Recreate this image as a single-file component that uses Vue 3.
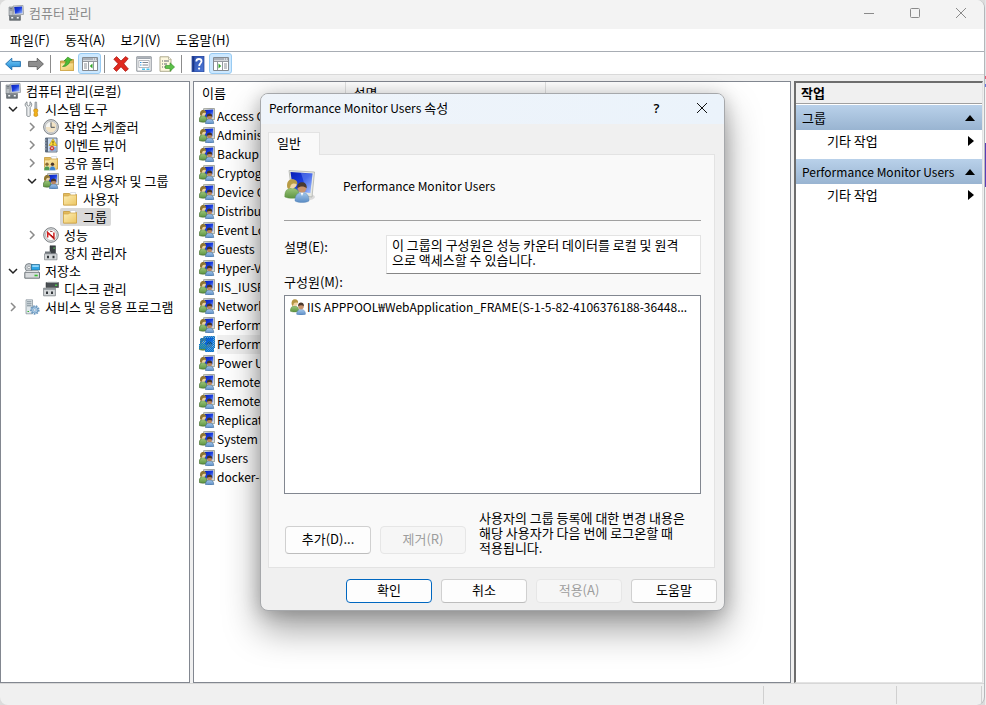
<script setup>
import { ref } from 'vue'

const menus = ['파일(F)', '동작(A)', '보기(V)', '도움말(H)']

const tools = [
  { icon: 'back', label: '뒤로' },
  { icon: 'forward', label: '앞으로' },
  { sep: true },
  { icon: 'up', label: '한 수준 위로' },
  { icon: 'tree-pane', label: '콘솔 트리', on: true },
  { sep: true },
  { icon: 'delete', label: '삭제' },
  { icon: 'props', label: '속성' },
  { icon: 'export', label: '목록 내보내기' },
  { sep: true },
  { icon: 'help', label: '도움말' },
  { icon: 'action-pane', label: '작업 창', on: true },
]

const tree = [
  { level: 0, icon: 'computer', text: '컴퓨터 관리(로컬)' },
  { level: 1, icon: 'tools', text: '시스템 도구', state: 'open' },
  { level: 2, icon: 'clock', text: '작업 스케줄러', state: 'closed' },
  { level: 2, icon: 'events', text: '이벤트 뷰어', state: 'closed' },
  { level: 2, icon: 'shared', text: '공유 폴더', state: 'closed' },
  { level: 2, icon: 'group', text: '로컬 사용자 및 그룹', state: 'open' },
  { level: 3, icon: 'folder', text: '사용자' },
  { level: 3, icon: 'folder', text: '그룹', selected: true },
  { level: 2, icon: 'perf', text: '성능', state: 'closed' },
  { level: 2, icon: 'device', text: '장치 관리자' },
  { level: 1, icon: 'storage', text: '저장소', state: 'open' },
  { level: 2, icon: 'disk', text: '디스크 관리' },
  { level: 1, icon: 'services', text: '서비스 및 응용 프로그램', state: 'closed' },
]

const groups = [
  'Access Control Assistance Operators',
  'Administrators',
  'Backup Operators',
  'Cryptographic Operators',
  'Device Owners',
  'Distributed COM Users',
  'Event Log Readers',
  'Guests',
  'Hyper-V Administrators',
  'IIS_IUSRS',
  'Network Configuration Operators',
  'Performance Log Users',
  'Performance Monitor Users',
  'Power Users',
  'Remote Desktop Users',
  'Remote Management Users',
  'Replicator',
  'System Managed Accounts Group',
  'Users',
  'docker-users',
]
const selectedGroup = 12

const actions = [
  { title: '그룹' },
  { title: 'Performance Monitor Users', latin: true },
]

const description = ref('이 그룹의 구성원은 성능 카운터 데이터를 로컬 및 원격\n으로 액세스할 수 있습니다.')
</script>

<template>
  <div class="screen">
    <svg class="sprite" aria-hidden="true">
      <defs>
        <linearGradient id="g-screen" x1="0" y1="0" x2="1" y2="1">
          <stop offset="0" stop-color="#0a1fb4" />
          <stop offset=".5" stop-color="#1a3ee0" />
          <stop offset="1" stop-color="#a9c6ff" />
        </linearGradient>
        <linearGradient id="g-folder" x1="0" y1="0" x2="1" y2="1">
          <stop offset="0" stop-color="#fdeeb5" />
          <stop offset="1" stop-color="#ecc663" />
        </linearGradient>
        <linearGradient id="g-blue" x1="0" y1="0" x2="0" y2="1">
          <stop offset="0" stop-color="#7fd0f8" />
          <stop offset="1" stop-color="#1583d2" />
        </linearGradient>
        <linearGradient id="g-help" x1="0" y1="0" x2="1" y2="1">
          <stop offset="0" stop-color="#2c4fae" />
          <stop offset="1" stop-color="#4d78d6" />
        </linearGradient>
        <linearGradient id="g-green" x1="0" y1="0" x2="0" y2="1">
          <stop offset="0" stop-color="#9cc67c" />
          <stop offset="1" stop-color="#5d9440" />
        </linearGradient>
        <linearGradient id="g-coat" x1="0" y1="0" x2="0" y2="1">
          <stop offset="0" stop-color="#a4c8ec" />
          <stop offset="1" stop-color="#5b8cc4" />
        </linearGradient>
        <pattern id="g-check" width="2" height="2" patternUnits="userSpaceOnUse">
          <rect width="1" height="1" fill="#0078d7" />
          <rect x="1" y="1" width="1" height="1" fill="#0078d7" />
        </pattern>
      </defs>

      <symbol id="i-computer" viewBox="0 0 16 16">
        <path d="M5 1 15 .4 15.6 9.4 6 10.2z" fill="#d5d8da" stroke="#8b9196" stroke-width=".7" />
        <path d="M6.2 2 14 1.6 14.5 8.2 7 8.8z" fill="url(#g-screen)" />
        <path d="M1 2h4v9H1z" fill="#b9bec2" stroke="#767d83" stroke-width=".6" />
        <path d="M1.7 3.4h2.6M1.7 5h2.6" stroke="#5c6369" stroke-width=".8" />
        <path d="M1.6 10.5h10.8v4.8H1.6z" fill="#6f777d" stroke="#4a5055" stroke-width=".6" />
        <path d="M3.2 12h2v1.6h-2zM8.8 12h2v1.6h-2z" fill="#f2f4f5" />
        <path d="M1.6 10.9h10.8" stroke="#a5abb0" stroke-width=".8" />
      </symbol>

      <symbol id="i-person-pair" viewBox="0 0 16 16">
        <path d="M.3 12.2C.3 8.800 1.800 7 4.600 7s4.300 1.800 4.300 5.200c-2 1-6.600 1-8.600 0z" fill="url(#g-green)" stroke="#517f38" stroke-width=".4" />
        <circle cx="4.800" cy="3.900" r="3" fill="#f0d2a4" />
        <path d="M1.600 5.200C1.200 1.900 2.900.2 5 .3c2.100.1 3.400 1.600 3.100 3.600-2-.9-3.600-.5-4.400.6-.2 1-.4 2-1.100 2.700z" fill="#b59643" />
        <path d="M6.600 15.200c0-3.200 1.600-4.800 4.400-4.800s4.500 1.600 4.500 4.800c-2 1.100-6.900 1.100-8.900 0z" fill="url(#g-coat)" stroke="#4877ad" stroke-width=".4" />
        <circle cx="11" cy="7.400" r="2.800" fill="#c8936c" />
        <path d="M8.100 7.200C8 4.600 9.400 3.600 11 3.600s3 1 2.900 3.600c-1.600-1.300-4.100-1.200-5.800 0z" fill="#4a382c" />
      </symbol>

      <symbol id="i-group" viewBox="0 0 16 16">
        <path d="M4.600.7 15.400.4 15.600 11.500 5 11z" fill="#dcdfd6" stroke="#7f847b" stroke-width=".7" />
        <path d="M5.800 1.900 14.200 1.600 14.300 9.800 6 9.500z" fill="url(#g-screen)" />
        <path d="M.3 13.500C.1 9.500 1.400 7.600 4 7.600s4.100 1.900 4 5.900c-2 .9-5.700.9-7.700 0z" fill="url(#g-green)" stroke="#3f652b" stroke-width=".6" />
        <circle cx="4.300" cy="5.200" r="2.500" fill="#ead0a0" />
        <path d="M1.200 7.600C.5 4 1.900 1.900 4.300 2c2 .1 3.100 1.400 2.900 3.100-1.800-.8-3.100-.5-3.700.4-.2 1-.5 1.800-1.200 2.400z" fill="#8f7632" />
        <path d="M6.500 15.600c0-3.400 1.500-4.700 4.100-4.700s4.100 1.300 4.100 4.700c-2 .6-6.200.6-8.200 0z" fill="url(#g-coat)" stroke="#3d6893" stroke-width=".6" />
        <circle cx="10.600" cy="8.800" r="2.500" fill="#b98561" />
        <path d="M7.900 8.800c-.1-2.300 1.100-3.300 2.700-3.300s2.800 1 2.700 3.300c-1.600-1.200-3.700-1.200-5.400 0z" fill="#43342a" />
      </symbol>

      <symbol id="i-group-selected" viewBox="0 0 16 16">
        <use href="#i-group" width="16" height="16" />
        <path d="M1 2h3l1-2h11v11l-1 1v4H6v-3H0V8h1z" fill="#0078d7" opacity=".35" />
        <path d="M1 2h3l1-2h11v11l-1 1v4H6v-3H0V8h1z" fill="url(#g-check)" shape-rendering="crispEdges" />
      </symbol>

      <symbol id="i-folder" viewBox="0 0 16 16">
        <path d="M1.500 2.500h6l1 1h6v10.500h-13z" fill="#e3bb5c" stroke="#c59a3d" stroke-width=".8" />
        <path d="M8.600 1.500h5v3h-5z" fill="#fff" stroke="#b9bfc9" stroke-width=".5" />
        <path d="M1.500 5h5l1-1h7v10h-13z" fill="url(#g-folder)" stroke="#cfa446" stroke-width=".7" />
      </symbol>

      <symbol id="i-shared" viewBox="0 0 16 16">
        <use href="#i-folder" width="16" height="16" />
        <circle cx="4" cy="9.200" r="1.700" fill="#8a6a34" />
        <path d="M1 15.400c0-3 1-4.200 3-4.200s3 1.200 3 4.200z" fill="#4f9a50" stroke="#fff" stroke-width=".3" />
        <circle cx="9.500" cy="9.200" r="1.700" fill="#4a382c" />
        <path d="M6.500 15.400c0-3 1-4.200 3-4.200s3 1.200 3 4.200z" fill="#3f86cc" stroke="#fff" stroke-width=".3" />
      </symbol>

      <symbol id="i-tools" viewBox="0 0 16 16">
        <path d="M3 .8v3.200l1.500 1L6 4V.8c1.400.8 1.900 2 1.700 3.400C7.500 5.300 6.800 6 6.200 6.500v8c0 1.300-3.400 1.300-3.400 0v-8C2.200 6 1.400 5.300 1.200 4.200 1 2.800 1.600 1.600 3 .8z" fill="#eceeef" stroke="#71787d" stroke-width=".8" />
        <path d="M11 1h1.600l.3 6.500h-2.200z" fill="#b4babe" stroke="#747b80" stroke-width=".5" />
        <path d="M10.200 8h3.200l.6 2-.8 1.200.6 3.300c-.8 1.200-3.200 1.200-4 0l.6-3.300L9.600 10z" fill="#f2b21c" stroke="#b97d0c" stroke-width=".6" />
      </symbol>

      <symbol id="i-clock" viewBox="0 0 16 16">
        <circle cx="8" cy="8" r="7.400" fill="#d8dadc" stroke="#75797d" stroke-width=".9" />
        <circle cx="8" cy="8" r="5.600" fill="#f6f6f2" stroke="#a4a7aa" stroke-width=".6" />
        <path d="M8 2.800V8H2.800A5.200 5.200 0 0 0 13.200 8 5.200 5.200 0 0 0 8 2.800z" fill="#f1e2c4" />
        <path d="M8 3.400V8.300h3.800" fill="none" stroke="#4c5258" stroke-width="1" />
      </symbol>

      <symbol id="i-events" viewBox="0 0 16 16">
        <path d="M2.500 1h11.500v14H2.500z" fill="#c9daee" stroke="#5e6d80" stroke-width=".9" />
        <path d="M2.500 1H5v14H2.500z" fill="#5b6a7e" />
        <path d="M1.500 3h2M1.500 6h2M1.500 9h2M1.500 12h2" stroke="#aeb8c4" stroke-width="1" />
        <path d="M6.500 13h6.500M6.500 11h6.500" stroke="#5580c2" stroke-width="1" />
        <path d="M10 1.800 14 8.500H6z" fill="#fcd934" stroke="#bd9412" stroke-width=".6" />
        <path d="M10 4v2.500M10 7v.8" stroke="#4b3b00" stroke-width=".9" />
        <circle cx="9" cy="11.200" r="2.200" fill="#d2362b" />
        <path d="M8.100 10.300 9.900 12.100M9.900 10.300 8.100 12.100" stroke="#fff" stroke-width=".7" />
      </symbol>

      <symbol id="i-perf" viewBox="0 0 16 16">
        <circle cx="8" cy="8" r="7.300" fill="#e2e4e5" stroke="#6d7276" stroke-width=".9" />
        <circle cx="8" cy="8" r="5.500" fill="#fff" stroke="#8d9296" stroke-width=".6" />
        <path d="M4.700 10.500V5.600l6.200 5.800V5.500" fill="none" stroke="#d02020" stroke-width="1.500" />
        <path d="M7 4.200 9.500 4.600M8 8l3 3.200" stroke="#801010" stroke-width=".8" />
      </symbol>

      <symbol id="i-device" viewBox="0 0 16 16">
        <path d="M7 .8h5.500v8H7z" fill="#3c4145" stroke="#25292c" stroke-width=".5" />
        <path d="M10.500 2.500h1.200v1.200h-1.200z" fill="#5fe05a" />
        <path d="M2 6.500h6V9H2z" fill="#71777c" />
        <path d="M1.500 8.800h12.500v6H1.500z" fill="#d4d7d9" stroke="#7c8287" stroke-width=".7" />
        <path d="M4 10.800h2v2.400H4zM9.500 10.800h2v2.400h-2z" fill="#33383c" />
      </symbol>

      <symbol id="i-storage" viewBox="0 0 16 16">
        <circle cx="5" cy="4.500" r="4" fill="#c6cbcf" stroke="#6b7378" stroke-width=".8" />
        <circle cx="5" cy="4.500" r="1.300" fill="#fff" stroke="#7c8489" stroke-width=".6" />
        <path d="M7.500 1.500h8v5.500h-8z" fill="#2fa6e6" stroke="#17648f" stroke-width=".7" />
        <path d="M8.300 2.300h6.400v1.600H8.300z" fill="#9fdcfb" />
        <path d="M.8 9.500h14.700v5.700H.8z" fill="#d8dbdd" stroke="#5f666b" stroke-width=".9" />
        <path d="M1 9.500h14.200l-1.400-1.800H2.400z" fill="#f1f2f3" stroke="#767c81" stroke-width=".6" />
        <path d="M10.500 11.700h3.200v1.600h-3.200z" fill="#35c22d" />
      </symbol>

      <symbol id="i-disk" viewBox="0 0 16 16">
        <path d="M3 1.500h12.500v5H3z" fill="#4a4f53" stroke="#2c3033" stroke-width=".5" />
        <path d="M3 1.800 5 .8h8.800l1.600 1z" fill="#aeb3b7" />
        <path d="M12 3.600h2.200v1.200H12z" fill="#4be045" />
        <path d="M.6 7.200h11.800v7.600H.6z" fill="#d4d7d9" stroke="#787e83" stroke-width=".8" />
        <path d="M.6 7.200h11.800v1.600H.6z" fill="#8d9398" />
        <path d="M3 10.500h2v2.600H3zM8 10.500h2v2.600H8z" fill="#33383c" />
      </symbol>

      <symbol id="i-services" viewBox="0 0 16 16">
        <path d="M2 .8h6.500v14H2z" fill="#dfe6ea" stroke="#7f8c95" stroke-width=".7" />
        <path d="M3 2.800h4.500M3 4.800h4.500M3 6.800h4.500" stroke="#6f7f8a" stroke-width=".9" />
        <path d="M3.500 12.500H5" stroke="#35b52d" stroke-width="1.200" />
        <circle cx="10.800" cy="11" r="3.900" fill="none" stroke="#6e9cc4" stroke-width="1.800" stroke-dasharray="1.600 1.100" />
        <circle cx="10.800" cy="11" r="3.200" fill="#a9cbe8" stroke="#5785ad" stroke-width=".7" />
        <circle cx="10.800" cy="11" r="1.200" fill="#fff" stroke="#5785ad" stroke-width=".5" />
      </symbol>

      <symbol id="i-back" viewBox="0 0 16 16">
        <path d="M.6 8 6.800 2.200V5.400H15.400V10.600H6.800V13.800z" fill="url(#g-blue)" stroke="#1a6bab" stroke-width=".9" stroke-linejoin="round" />
      </symbol>
      <symbol id="i-forward" viewBox="0 0 16 16">
        <path d="M15.400 8 9.200 2.200V5.400H.6V10.600H9.200V13.800z" fill="#8e8e8e" stroke="#5c5c5c" stroke-width=".9" stroke-linejoin="round" />
      </symbol>
      <symbol id="i-up" viewBox="0 0 16 16">
        <path d="M1.500 5h4l1-1.500h8v11h-13z" fill="#dcb558" stroke="#b98f34" stroke-width=".8" />
        <path d="M1.500 7h13v7.500h-13z" fill="url(#g-folder)" stroke="#cfa446" stroke-width=".6" />
        <path d="M3.500 10.500C5.500 9.500 6.800 7.500 7 4.800L5 5 8.800 1l4.400 3-2.200.4C10.500 8 7.500 10.800 3.500 10.500z" fill="#4fba36" stroke="#23851a" stroke-width=".5" />
      </symbol>
      <symbol id="i-tree-pane" viewBox="0 0 16 16">
        <path d="M.5 1.500h15v13H.5z" fill="#fff" stroke="#858a90" />
        <path d="M1 2h14v2.500H1z" fill="#aab0b8" />
        <path d="M11 3h1M13 3h1" stroke="#fff" />
        <path d="M1 5.500h14M6.500 6v8M11.500 6v8" stroke="#9499a0" />
        <path d="M2 8h3M2 10h3M2 12h3" stroke="#8a9098" />
        <path d="M10.500 7.500v5L7.800 10z" fill="#33a528" />
      </symbol>
      <symbol id="i-action-pane" viewBox="0 0 16 16">
        <path d="M.5 1.500h15v13H.5z" fill="#fff" stroke="#858a90" />
        <path d="M1 2h14v2.500H1z" fill="#aab0b8" />
        <path d="M11 3h1M13 3h1" stroke="#fff" />
        <path d="M1 5.500h14M4.500 6v8M9.500 6v8" stroke="#9499a0" />
        <path d="M11 8h3M11 10h3M11 12h3" stroke="#8a9098" />
        <path d="M5.500 7.500v5L8.200 10z" fill="#33a528" />
      </symbol>
      <symbol id="i-delete" viewBox="0 0 16 16">
        <path d="M.8 3.200 3.600.6 8 5 12.600.6 15.200 2.600 10.800 7.800 15.400 13 12.400 15.400 8 10.800 3.400 15.400.6 12.600 5.200 7.800z" fill="#e02a20" stroke="#a5140c" stroke-width=".7" stroke-linejoin="round" />
      </symbol>
      <symbol id="i-props" viewBox="0 0 16 16">
        <path d="M.8.8h14.400v14.400H.8z" fill="#fcfcfd" stroke="#878d95" />
        <path d="M1.300 2.200h13.400" stroke="#9fa6ae" stroke-width="1.800" />
        <path d="M2.800 4.500h10.400v7H2.800z" fill="#fff" stroke="#949aa2" stroke-width=".7" />
        <path d="M4 6.500h1.500M4 9h1.500" stroke="#2c96e0" stroke-width="1.200" />
        <path d="M6.500 6.500h5.500M6.500 9h5.500" stroke="#7e868f" />
        <path d="M6 13.300h3M10.500 13.300h3" stroke="#4bc3ee" stroke-width="1.400" />
      </symbol>
      <symbol id="i-export" viewBox="0 0 16 16">
        <path d="M1 .8h8.500l2.500 2.500v12H1z" fill="#fdf8df" stroke="#a5a083" stroke-width=".9" />
        <path d="M9.500.8v2.500H12" fill="#fff" stroke="#a5a083" stroke-width=".7" />
        <path d="M3 5h1M5 5h5M3 8h1M5 8h3M3 11h1M5 11h3" stroke="#5d6470" />
        <path d="M6.500 9.500h4.500V6.800l4.600 4.200-4.600 4.200v-2.700H6.500z" fill="#5cc04a" stroke="#2f8e22" stroke-width=".6" />
      </symbol>
      <symbol id="i-help" viewBox="0 0 16 16">
        <path d="M2 0h12v16H2z" fill="url(#g-help)" stroke="#22408f" stroke-width=".7" />
        <path d="M2.500.5h1.800v15H2.500z" fill="#1c3787" />
        <path d="M6.300 5.500c0-3.400 5.200-3.200 5.200-.2 0 2-2.300 2.200-2.300 4.600" fill="none" stroke="#fff" stroke-width="1.800" />
        <circle cx="9.100" cy="12.600" r="1.100" fill="#fff" />
      </symbol>

      <symbol id="i-group-large" viewBox="0 0 32 34">
        <ellipse cx="22" cy="28" rx="9" ry="3.500" fill="#000" opacity=".12" />
        <path d="M5 1.500 30.500 3 28 28 8 25z" fill="#e6e8e4" stroke="#a7aaa5" stroke-width=".7" />
        <path d="M6.500 3 28.500 4.500 26.300 24 9 22z" fill="url(#g-screen)" />
        <path d="M17 4 28.500 4.500 26.300 24 23 23.500z" fill="#9dbcff" opacity=".35" />
        <path d="M.8 28C.5 21.500 3.500 19 8 19s7.600 2.500 7.500 9c-3.500 1.800-11.200 1.800-14.700 0z" fill="url(#g-green)" stroke="#5f9342" stroke-width=".4" />
        <circle cx="8.400" cy="15" r="4.400" fill="#f0d6a8" />
        <path d="M3.200 18.500C2.400 13 4.800 10 8.600 10.200c3.200.2 5.200 2.400 4.800 5-3.400-1.400-5.400-.8-6.600.8-.4 1.600-.8 3.200-2 4z" fill="#b99c46" />
        <path d="M11 32c-.2-6 2.600-8.500 7-8.500s7.200 2.500 7 8.500c-3.500 2-10.500 2-14 0z" fill="url(#g-coat)" stroke="#5784b6" stroke-width=".4" />
        <path d="M16.500 23.500 18 27l1.500-3.500z" fill="#fff" />
        <circle cx="18" cy="19" r="4.500" fill="#c8936c" />
        <path d="M13.300 19.200c-.3-4.200 1.900-5.900 4.700-5.900s5 1.700 4.700 5.900c-2.700-2.300-6.500-2.300-9.400 0z" fill="#4a3a30" />
      </symbol>
    </svg>

    <div class="window">
      <header class="titlebar">
        <svg class="ico"><use href="#i-computer" /></svg>
        <h1>컴퓨터 관리</h1>
        <div class="caption">
          <button type="button" aria-label="최소화">
            <svg viewBox="0 0 12 12"><path d="M1 6.500h10" /></svg>
          </button>
          <button type="button" aria-label="최대화">
            <svg viewBox="0 0 12 12"><rect x="1.500" y="1.500" width="9" height="9" rx="1" /></svg>
          </button>
          <button type="button" aria-label="닫기">
            <svg viewBox="0 0 12 12"><path d="M1 1 11 11M11 1 1 11" /></svg>
          </button>
        </div>
      </header>

      <nav class="menubar">
        <button v-for="m in menus" :key="m" type="button">{{ m }}</button>
      </nav>

      <div class="toolbar">
        <template v-for="(t, i) in tools" :key="i">
          <span v-if="t.sep" class="sep"></span>
          <button v-else type="button" :class="{ on: t.on }" :aria-label="t.label">
            <svg class="ico"><use :href="'#i-' + t.icon" /></svg>
          </button>
        </template>
      </div>

      <main class="panes">
        <ul class="tree">
          <li v-for="n in tree" :key="n.text" :class="['l' + n.level]">
            <span v-if="n.level" class="twist">
              <svg v-if="n.state === 'open'" viewBox="0 0 10 10" class="open"><path d="M1 3 5 7 9 3" /></svg>
              <svg v-else-if="n.state === 'closed'" viewBox="0 0 10 10"><path d="M3 1 7 5 3 9" /></svg>
            </span>
            <span class="node" :class="{ selected: n.selected }">
              <svg class="ico"><use :href="'#i-' + n.icon" /></svg>
              <span>{{ n.text }}</span>
            </span>
          </li>
        </ul>

        <section class="list">
          <table>
            <thead>
              <tr>
                <th class="c-name">이름</th>
                <th class="c-desc">설명</th>
                <th></th>
              </tr>
            </thead>
            <tbody>
              <tr v-for="(g, i) in groups" :key="g" :class="{ selected: i === selectedGroup }">
                <td>
                  <div class="cell">
                    <svg class="ico"><use :href="i === selectedGroup ? '#i-group-selected' : '#i-group'" /></svg>
                    <span class="latin">{{ g }}</span>
                  </div>
                </td>
                <td></td>
                <td></td>
              </tr>
            </tbody>
          </table>
        </section>

        <aside class="actions">
          <h2>작업</h2>
          <section v-for="a in actions" :key="a.title">
            <h3>
              <span :class="{ latin: a.latin }">{{ a.title }}</span>
              <svg viewBox="0 0 10 6"><path d="M0 6 5 0 10 6z" /></svg>
            </h3>
            <button type="button">
              <span>기타 작업</span>
              <svg class="right" viewBox="0 0 6 10"><path d="M0 0 6 5 0 10z" /></svg>
            </button>
          </section>
        </aside>
      </main>

      <footer class="status">
        <span class="grow"></span>
        <span class="mid"></span>
        <span class="end"></span>
      </footer>
    </div>
    <div class="behind"></div>

    <form class="dialog" role="dialog" aria-labelledby="dlg-title" @submit.prevent>
      <header class="dlg-title">
        <h2 id="dlg-title"><span class="latin">Performance Monitor Users</span> 속성</h2>
        <button type="button" class="q" aria-label="도움말 보기">?</button>
        <button type="button" aria-label="대화 상자 닫기">
          <svg viewBox="0 0 12 12"><path d="M1 1 11 11M11 1 1 11" /></svg>
        </button>
      </header>

      <div class="dlg-body">
        <div class="tabs"><button type="button" role="tab" aria-selected="true">일반</button></div>
        <div class="page">
          <div class="identity">
            <svg class="large"><use href="#i-group-large" /></svg>
            <span class="latin">Performance Monitor Users</span>
          </div>
          <div class="desc">
            <label for="desc">설명(E):</label>
            <textarea id="desc" v-model="description" rows="2" spellcheck="false"></textarea>
          </div>
          <div id="members-label" class="members-label">구성원(M):</div>
          <ul class="members" role="listbox" aria-labelledby="members-label">
            <li role="option">
              <svg class="ico"><use href="#i-person-pair" /></svg>
              <span class="latin">IIS APPPOOL₩WebApplication_FRAME(S-1-5-82-4106376188-36448...</span>
            </li>
          </ul>
          <div class="edit">
            <button type="button" class="btn">추가(D)...</button>
            <button type="button" class="btn" disabled>제거(R)</button>
            <p>사용자의 그룹 등록에 대한 변경 내용은<br />해당 사용자가 다음 번에 로그온할 때<br />적용됩니다.</p>
          </div>
        </div>
      </div>

      <footer class="dlg-foot">
        <button type="submit" class="btn primary">확인</button>
        <button type="button" class="btn">취소</button>
        <button type="button" class="btn" disabled>적용(A)</button>
        <button type="button" class="btn">도움말</button>
      </footer>
    </form>
  </div>
</template>

<style>
body {
  margin: 0;
  overflow: hidden;
}
</style>

<style scoped>
.screen {
  position: relative;
  display: flex;
  height: 100vh;
  overflow: hidden;
  background: #dcdcdc;
  color: #000;
  font: 13px/18px "Noto Sans CJK KR", sans-serif;
}
.screen *,
.screen *::before {
  box-sizing: border-box;
}
.sprite {
  position: absolute;
  width: 0;
  height: 0;
}
h1, h2, h3, p, ul {
  margin: 0;
  padding: 0;
  font-size: inherit;
  font-weight: 400;
  list-style: none;
}
button {
  padding: 0;
  border: 0;
  background: none;
  color: inherit;
  font: inherit;
  white-space: nowrap;
}
.latin {
  font-size: 12px;
  white-space: nowrap;
}
.ico {
  flex: none;
  display: block;
  width: 16px;
  height: 16px;
}

.window {
  flex: 1;
  min-width: 0;
  display: flex;
  flex-direction: column;
  background: #f0f0f0;
  border-right: 1px solid #b4b7ba;
  border-radius: 8px;
  overflow: hidden;
}
.behind {
  width: 1px;
  background: linear-gradient(#e4e7ea 76px, #e6607a 76px 79px, #e4e7ea 79px 84px, #6a78e0 84px 87px, #f4f4f4 87px 143px, #5a3fb8 143px 187px, #f0f0f0 187px);
}

.titlebar {
  flex: none;
  display: flex;
  align-items: center;
  height: 29px;
  padding: 0 0 3px 8px;
  gap: 5px;
  background: #f3f3f3;
  color: #8a8a8a;
}
.titlebar h1 {
  flex: 1;
}
.caption {
  display: flex;
}
.caption button {
  display: grid;
  place-items: center;
  width: 46px;
  height: 26px;
}
.caption svg,
.dlg-title svg {
  width: 12px;
  height: 12px;
  fill: none;
  stroke: #8a8a8a;
}

.menubar {
  flex: none;
  display: flex;
  gap: 15px;
  height: 23px;
  padding: 0 10px 1px;
  background: #fff;
  border-bottom: 1px solid #a8adb4;
}
.toolbar {
  flex: none;
  display: flex;
  align-items: center;
  height: 23px;
  padding: 1px 0 0 1px;
  background: #fff;
  border-bottom: 1px solid #dadada;
}
.toolbar button {
  display: grid;
  place-items: center;
  width: 23px;
  height: 21px;
  border: 1px solid transparent;
  border-radius: 3px;
}
.toolbar button.on {
  background: #cce8ff;
  border-color: #99cbf2;
}
.toolbar .sep {
  width: 8px;
  height: 18px;
  background: linear-gradient(#8c8c8c, #8c8c8c) 3px 0 / 1px 100% no-repeat;
}

.panes {
  flex: 1;
  min-height: 0;
  display: grid;
  grid-template-columns: 190px 1fr 189px;
  column-gap: 3px;
  padding: 6px 1px 0 0;
}
.tree,
.list {
  min-width: 0;
  overflow: hidden;
  background: #fff;
  border: 1px solid #828790;
}
.tree li {
  display: flex;
  align-items: center;
  gap: 1px;
  height: 18px;
}
.tree .l0 { padding-left: 2px; }
.tree .l1 { padding-left: 3px; }
.tree .l2 { padding-left: 22px; }
.tree .l3 { padding-left: 41px; }
.twist {
  display: grid;
  place-items: center;
  width: 17px;
}
.twist svg {
  width: 10px;
  height: 10px;
  fill: none;
  stroke: #8a8a8a;
  stroke-width: 1.5;
}
.twist .open {
  stroke: #222;
}
.node {
  display: flex;
  align-items: center;
  gap: 5px;
  height: 18px;
  padding: 0 4px 0 2px;
  border-radius: 2px;
  white-space: nowrap;
}
.node.selected {
  background: #d9d9d9;
}

.list table {
  width: 100%;
  table-layout: fixed;
  border-collapse: collapse;
}
.list th {
  height: 25px;
  padding: 0 8px 3px;
  border-right: 1px solid #e2e2e2;
  font-weight: 400;
  text-align: left;
}
.list th:last-child {
  border-right: 0;
}
.c-name { width: 151px; }
.c-desc { width: 200px; }
.list td {
  height: 19px;
  padding: 0;
}
.cell {
  display: flex;
  align-items: center;
  gap: 2px;
  height: 19px;
  padding-left: 5px;
}
.cell .ico {
  height: 18px;
  padding-bottom: 2px;
}
.cell span {
  flex: 1;
  min-width: 0;
  overflow: hidden;
  height: 19px;
}
.list .selected span {
  background: #f0f0f0;
}

.actions {
  background: #fff;
  border: 2px solid #6d6d6d;
  border-right: 1px solid #e3e3e3;
  border-bottom: 1px solid #e3e3e3;
}
.actions h2 {
  height: 21px;
  padding-left: 5px;
  background: #f0f0f0;
  border-bottom: 1px solid #a0a0a0;
  line-height: 20px;
  font-weight: 700;
}
.actions section {
  padding-top: 1px;
  margin-bottom: 6px;
}
.actions h3,
.actions button {
  display: flex;
  align-items: center;
  justify-content: space-between;
  width: 100%;
}
.actions h3 {
  height: 25px;
  padding: 0 7px 0 6px;
  background: linear-gradient(#b9d1ea, #99b4d1);
}
.actions button {
  height: 22px;
  padding: 0 8px 0 31px;
}
.actions svg {
  width: 10px;
  height: 6px;
}
.actions svg.right {
  width: 6px;
  height: 10px;
}

.status {
  flex: none;
  display: flex;
  height: 22px;
  padding: 2px 2px 1px 0;
  border-top: 1px solid #d7d7d7;
}
.status span {
  border-right: 1px solid #d0d0d0;
}
.status .grow { flex: 1; }
.status .mid { width: 133px; }
.status .end { width: 85px; }

.dialog {
  position: absolute;
  left: 260px;
  top: 93px;
  width: 465px;
  display: flex;
  flex-direction: column;
  background: #f0f0f0;
  border: 1px solid #a6a8ab;
  border-radius: 8px;
  box-shadow: 0 18px 36px rgba(0, 0, 0, .38), 0 2px 18px rgba(0, 0, 0, .2);
  overflow: hidden;
}
.dlg-title {
  display: flex;
  align-items: center;
  height: 30px;
  padding: 0 0 3px 8px;
  background: linear-gradient(90deg, #eff4fa, #ebf3fb);
}
.dlg-title h2 {
  flex: 1;
}
.dlg-title button {
  display: grid;
  place-items: center;
  width: 45px;
  height: 27px;
}
.dlg-title .q {
  font: 600 13px/18px "Open Sans", sans-serif;
}
.dlg-title svg {
  stroke: #111;
}
.dlg-body {
  padding: 8px 9px 0 7px;
}
.tabs {
  position: relative;
  margin-bottom: -1px;
}
.tabs button {
  display: block;
  width: 52px;
  height: 23px;
  padding: 0 10px 3px 0;
  background: #f9f9f9;
  border: 1px solid #e3e3e3;
  border-bottom: 0;
}
.page {
  padding: 13px 13px 12px 15px;
  background: #f9f9f9;
  border: 1px solid #e3e3e3;
}
.identity {
  display: flex;
  align-items: center;
  gap: 27px;
  height: 53px;
  padding-bottom: 17px;
  border-bottom: 1px solid #a0a0a0;
}
.large {
  width: 32px;
  height: 34px;
}
.desc {
  display: flex;
  justify-content: space-between;
  padding-top: 14px;
}
.desc label {
  padding-top: 3px;
}
.desc textarea {
  display: block;
  width: 315px;
  height: 39px;
  padding: 1px 5px;
  border: 1px solid #e3e3e3;
  border-bottom-color: #868686;
  border-radius: 0;
  background: #fff;
  color: inherit;
  font: inherit;
  line-height: 15px;
  white-space: pre;
  resize: none;
  outline: 0;
  overflow: hidden;
}
.members-label {
  height: 21px;
  line-height: 16px;
}
.members {
  height: 199px;
  padding: 2px 5px;
  border: 1px solid #828790;
  background: #fff;
}
.members li {
  display: flex;
  align-items: center;
  gap: 1px;
}
.edit {
  display: flex;
  align-items: flex-end;
  gap: 9px;
  padding: 16px 0 0 1px;
}
.edit .btn {
  height: 28px;
  margin-bottom: 1px;
}
.edit p {
  padding-left: 4px;
  line-height: 15px;
  white-space: nowrap;
}
.btn {
  width: 86px;
  height: 24px;
  padding-bottom: 2px;
  background: #fdfdfd;
  border: 1px solid #d0d0d0;
  border-bottom-color: #bdbdbd;
  border-radius: 4px;
}
.btn.primary {
  border-color: #0067c0;
}
.btn:disabled {
  background: #f6f6f6;
  border-color: #e6e6e6;
  color: #9d9d9d;
}
.dlg-foot {
  display: flex;
  justify-content: flex-end;
  gap: 9px;
  padding: 11px 7px 7px;
}
</style>
